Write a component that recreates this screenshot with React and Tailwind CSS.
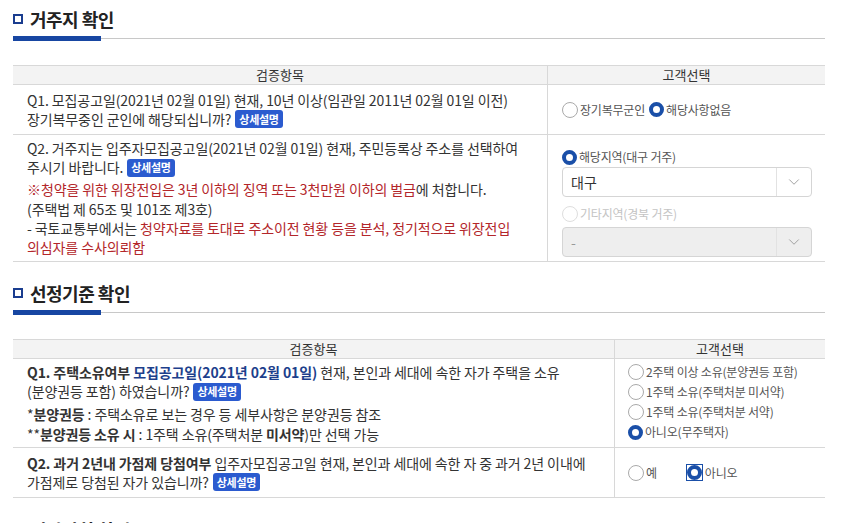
import { ChevronDown } from "lucide-react";

const font = { fontFamily: '"Noto Sans CJK KR", "Noto Sans", sans-serif' };

function Badge() {
  return (
    <span className="inline-flex items-center h-[18px] px-[4px] ml-1 rounded-[3px] bg-[#2b5bcf] text-white text-[11px] font-bold leading-none align-[1px] tracking-[-0.3px]">
      상세설명
    </span>
  );
}

function Radio({ checked, disabled, label, boxed }) {
  return (
    <label className={"inline-flex items-center gap-[2px] h-[16px] text-[12px] leading-[16px] tracking-[-0.2px] " + (disabled ? "text-[#c4c4c4]" : "text-[#555]")}>
      <span className={boxed ? "inline-flex items-center justify-center w-[17px] h-[17px] border border-[#1a4fa8]" : "inline-flex"}>
        {checked ? (
          <span className="w-[15px] h-[15px] rounded-full border-[4px] border-[#1a4fa8] bg-white" />
        ) : (
          <span className={"w-[16px] h-[16px] rounded-full border " + (disabled ? "border-[#dedede]" : "border-[#aaa]")} />
        )}
      </span>
      <span>{label}</span>
    </label>
  );
}

function Select({ value, disabled }) {
  return (
    <div className={"flex h-[30px] w-[250px] rounded-[4px] border border-[#d5d5d5] " + (disabled ? "bg-[#eeeeee]" : "bg-white")}>
      <div className={"flex-1 flex items-center px-2 text-[14px] " + (disabled ? "text-[#999]" : "text-[#333]")}>{value}</div>
      <div className="w-[35px] flex items-center justify-center border-l border-[#e2e2e2]">
        <ChevronDown size={18} strokeWidth={1.2} className="text-[#999]" />
      </div>
    </div>
  );
}

function Heading({ title }) {
  return (
    <div>
      <div className="flex items-center gap-[7px] h-[22px]">
        <span className="w-[10px] h-[10px] border-2 border-[#1a3d8f]" />
        <h2 className="text-[18px] font-bold text-[#222] tracking-[-0.5px]">{title}</h2>
      </div>
      <div className="relative mt-[6px] h-[5px]">
        <div className="absolute left-0 right-0 top-[2px] h-px bg-[#c8c8c8]" />
        <div className="absolute left-0 top-0 w-[88px] h-[5px] bg-[#1746a2]" />
      </div>
    </div>
  );
}

function TableHead({ left }) {
  return (
    <div className="flex h-[20px] bg-[#f3f3f3] border-t border-[#cfcfcf] border-b border-[#d8d8d8] text-[13px] text-[#333]">
      <div className="flex items-center justify-center border-r border-[#d8d8d8]" style={{ width: left }}>검증항목</div>
      <div className="flex-1 flex items-center justify-center">고객선택</div>
    </div>
  );
}

const red = "text-[#b3262a]";
const navy = "text-[#1d3f8c]";
const cell = "text-[14px] leading-[19px] tracking-[-0.1px]";

export default function App() {
  return (
    <div className="bg-white w-[843px] h-[523px] overflow-hidden pl-[13px] pr-[18px] pt-[8px] text-[#333]" style={font}>
      <Heading title="거주지 확인" />

      <div className="mt-[24px]">
        <TableHead left={535} />
        <div className="flex h-[50px] border-b border-[#d8d8d8]">
          <div className={"w-[535px] border-r border-[#d8d8d8] px-[14px] flex flex-col justify-center " + cell}>
            <p>Q1. 모집공고일(2021년 02월 01일) 현재, 10년 이상(임관일 2011년 02월 01일 이전)</p>
            <p>장기복무중인 군인에 해당되십니까?<Badge /></p>
          </div>
          <div className="flex-1 flex items-center gap-[4px] pl-[14px]">
            <Radio label="장기복무군인" />
            <Radio checked label="해당사항없음" />
          </div>
        </div>
        <div className="flex h-[127px] border-b border-[#d8d8d8]">
          <div className={"w-[535px] border-r border-[#d8d8d8] px-[14px] pt-[4px] " + cell}>
            <p>Q2. 거주지는 입주자모집공고일(2021년 02월 01일) 현재, 주민등록상 주소를 선택하여</p>
            <p>주시기 바랍니다.<Badge /></p>
            <p className="mt-[2px] leading-[20px]"><span className={red}>※청약을 위한 위장전입은 3년 이하의 징역 또는 3천만원 이하의 벌금</span>에 처합니다.</p>
            <p className="leading-[20px]">(주택법 제 65조 및 101조 제3호)</p>
            <p>- 국토교통부에서는 <span className={red}>청약자료를 토대로 주소이전 현황 등을 분석, 정기적으로 위장전입</span></p>
            <p className={red}>의심자를 수사의뢰함</p>
          </div>
          <div className="flex-1 pl-[14px] pt-[14px] flex flex-col">
            <Radio checked label="해당지역(대구 거주)" />
            <div className="mt-[2px]"><Select value="대구" /></div>
            <div className="mt-[6px]"><Radio disabled label="기타지역(경북 거주)" /></div>
            <div className="mt-[0px]"><Select value="-" disabled /></div>
          </div>
        </div>
      </div>

      <div className="mt-[20px]">
        <Heading title="선정기준 확인" />
      </div>

      <div className="mt-[24px]">
        <TableHead left={602} />
        <div className="flex h-[89px] border-b border-[#d8d8d8]">
          <div className={"w-[602px] border-r border-[#d8d8d8] px-[14px] pt-[4px] " + cell}>
            <p><b className="font-bold">Q1. 주택소유여부 </b><b className={"font-bold " + navy}>모집공고일(2021년 02월 01일)</b> 현재, 본인과 세대에 속한 자가 주택을 소유</p>
            <p>(분양권등 포함) 하였습니까?<Badge /></p>
            <p className="mt-[3px] leading-[20px]">*<b>분양권등</b> : 주택소유로 보는 경우 등 세부사항은 분양권등 참조</p>
            <p className="leading-[20px]">**<b>분양권등 소유 시</b> : 1주택 소유(주택처분 <b>미서약</b>)만 선택 가능</p>
          </div>
          <div className="flex-1 pl-[13px] pt-[5px] flex flex-col gap-[4px]">
            <Radio label="2주택 이상 소유(분양권등 포함)" />
            <Radio label="1주택 소유(주택처분 미서약)" />
            <Radio label="1주택 소유(주택처분 서약)" />
            <Radio checked label="아니오(무주택자)" />
          </div>
        </div>
        <div className="flex h-[50px] border-b border-[#d8d8d8]">
          <div className={"w-[602px] border-r border-[#d8d8d8] px-[14px] flex flex-col justify-center " + cell}>
            <p><b>Q2. 과거 2년내 가점제 당첨여부</b> 입주자모집공고일 현재, 본인과 세대에 속한 자 중 과거 2년 이내에</p>
            <p>가점제로 당첨된 자가 있습니까?<Badge /></p>
          </div>
          <div className="flex-1 flex items-center gap-[29px] pl-[13px]">
            <Radio label="예" />
            <Radio checked boxed label="아니오" />
          </div>
        </div>
      </div>

      <div className="mt-[21px]">
        <Heading title="기타사항 확인" />
      </div>
    </div>
  );
}
